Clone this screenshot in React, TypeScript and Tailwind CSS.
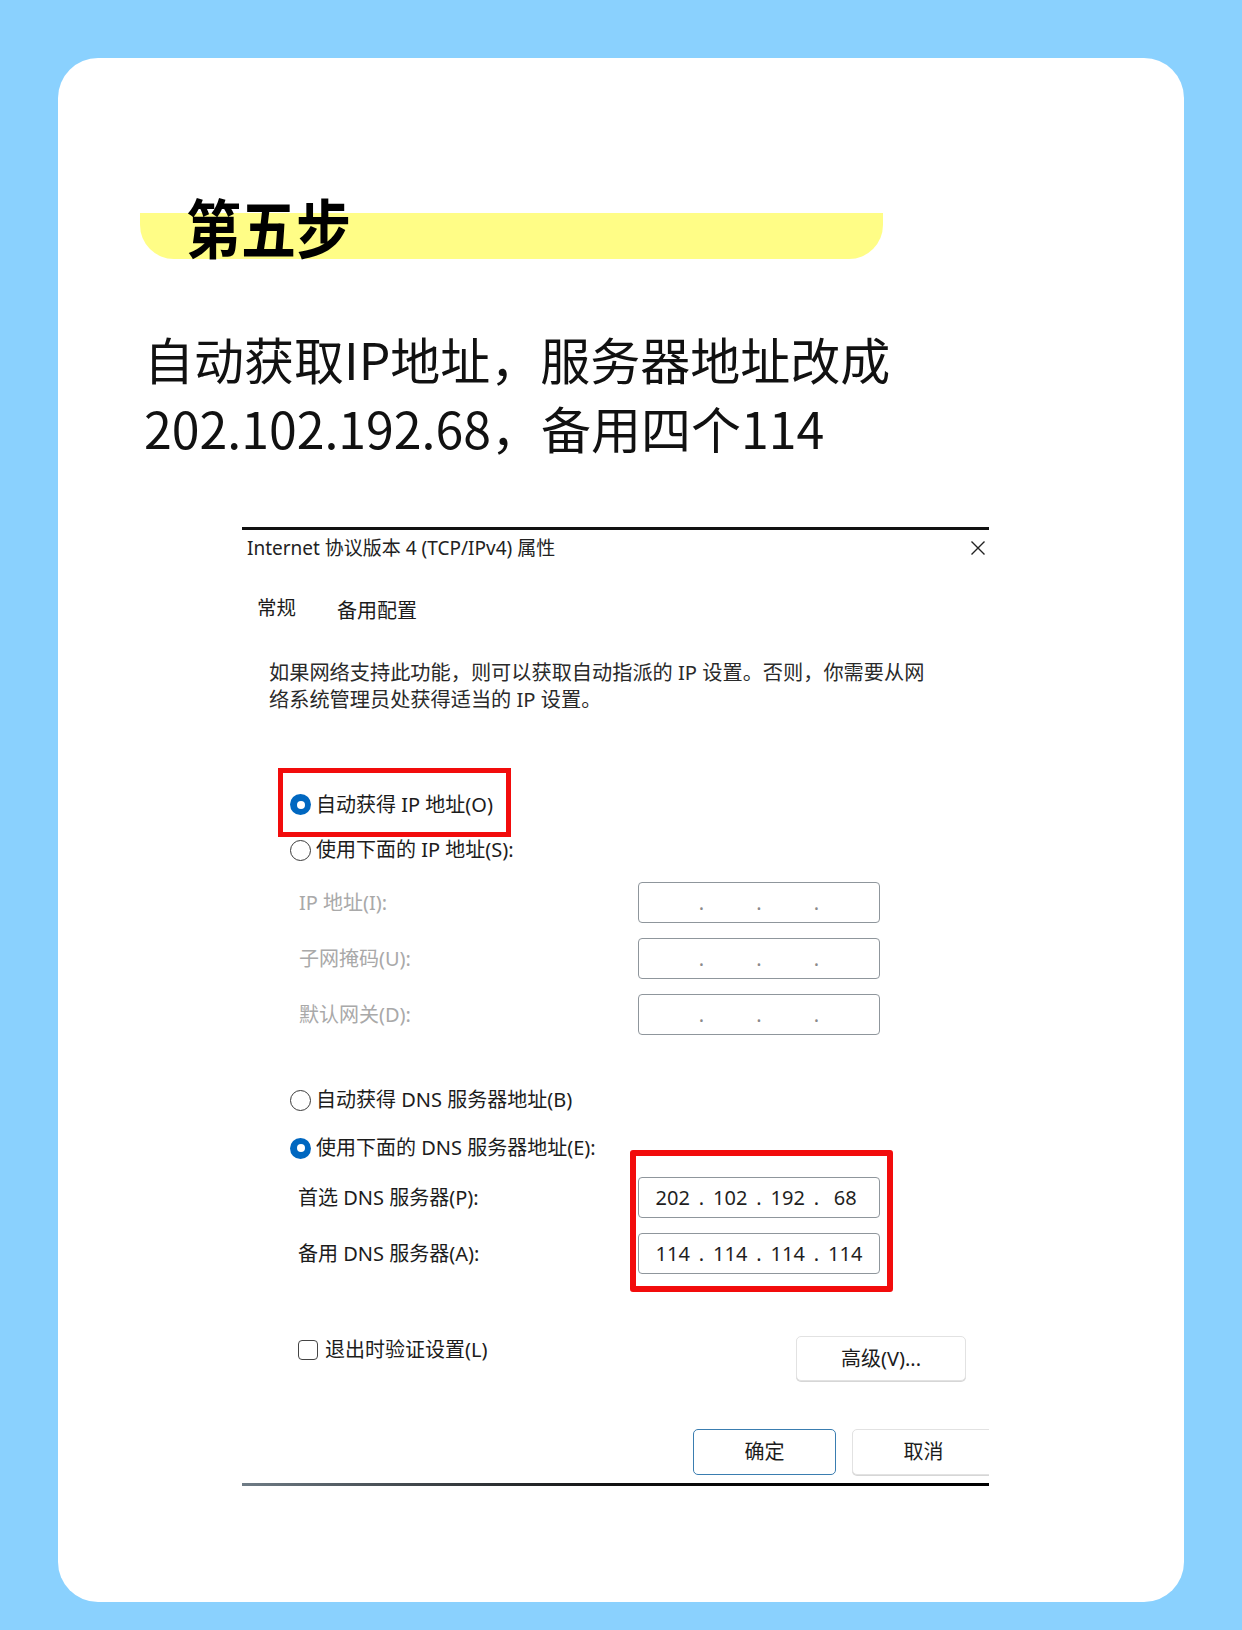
import { Fragment } from "react";

const RED = "border-[#f20c0c]";

function Radio({ on }: { on?: boolean }) {
  if (on) {
    return (
      <span className="flex h-[21px] w-[21px] shrink-0 items-center justify-center rounded-full bg-[#0067c0]">
        <span className="h-[8px] w-[8px] rounded-full bg-white" />
      </span>
    );
  }
  return <span className="h-[21px] w-[21px] shrink-0 rounded-full border-[1.5px] border-[#3a3a3a] bg-white" />;
}

function IpField({ parts }: { parts?: string[] }) {
  const segs = parts ?? ["", "", "", ""];
  return (
    <div className="flex h-[41px] w-[242px] items-center rounded-[4px] border border-[#8f969c] bg-white px-[5px] text-[20px]">
      {segs.map((s, i) => (
        <Fragment key={i}>
          {i > 0 && (
            <span className={parts ? "flex w-0 justify-center text-[#1f1f1f]" : "flex w-0 justify-center text-[#8a8a8a]"}>.</span>
          )}
          <span className="flex-1 text-center text-[#1f1f1f]">{s}</span>
        </Fragment>
      ))}
    </div>
  );
}

function RadioRow({ on, label, className }: { on?: boolean; label: string; className?: string }) {
  return (
    <div className={"flex items-center gap-[5px] " + (className ?? "")}>
      <Radio on={on} />
      <span className="leading-[24px]">{label}</span>
    </div>
  );
}

function Dialog() {
  const ipRows = ["IP 地址(I):", "子网掩码(U):", "默认网关(D):"];
  return (
    <div className="ml-[184px] mt-[65px] flex w-[747px] flex-col overflow-hidden border-t-[3px] border-[#111] font-['Noto_Sans','Noto_Sans_CJK_SC',sans-serif] text-[20px] text-[#1c1c1c]">
      {/* title bar */}
      <div className="flex h-[36px] items-center justify-between pl-[5px] pr-[2px]">
        <span className="text-[19px] text-[#222]">Internet 协议版本 4 (TCP/IPv4) 属性</span>
        <svg width="16" height="16" viewBox="0 0 16 16" className="mr-[1px]">
          <path d="M1.5 1.5 L14.5 14.5 M14.5 1.5 L1.5 14.5" stroke="#222" strokeWidth="1.4" fill="none" />
        </svg>
      </div>

      {/* tabs */}
      <div className="mt-[30px] flex h-[26px] items-start pl-[15px] leading-[24px]">
        <span className="text-[19.5px]">常规</span>
        <span className="ml-[41px] mt-[3px]">备用配置</span>
      </div>

      {/* description */}
      <div className="mt-[37px] pl-[27px] text-[20.2px] leading-[27px] text-[#2a2a2a]">
        <div>如果网络支持此功能，则可以获取自动指派的 IP 设置。否则，你需要从网</div>
        <div>络系统管理员处获得适当的 IP 设置。</div>
      </div>

      {/* ip mode */}
      <div className={"ml-[36px] mt-[55px] flex h-[69px] w-[233px] items-center border-[5px] pl-[7px] pt-[4px] " + RED}>
        <RadioRow on label="自动获得 IP 地址(O)" />
      </div>
      <RadioRow label="使用下面的 IP 地址(S):" className="ml-[48px] mt-[1px] h-[24px]" />

      <div className="mt-[20px] flex flex-col gap-[15px]">
        {ipRows.map((l) => (
          <div key={l} className="flex items-center pl-[57px]">
            <span className="w-[339px] text-[#a9a9a9]">{l}</span>
            <IpField />
          </div>
        ))}
      </div>

      {/* dns mode */}
      <RadioRow label="自动获得 DNS 服务器地址(B)" className="ml-[48px] mt-[53px] h-[24px]" />
      <RadioRow on label="使用下面的 DNS 服务器地址(E):" className="ml-[48px] mt-[24px] h-[24px]" />

      <div className="-mt-[10px] flex items-start pl-[56px]">
        <div className="flex w-[332px] flex-col gap-[15px] pt-[27px]">
          <div className="flex h-[41px] items-center">首选 DNS 服务器(P):</div>
          <div className="flex h-[41px] items-center">备用 DNS 服务器(A):</div>
        </div>
        <div className={"flex flex-col gap-[15px] rounded-[3px] border-[6px] pb-[12px] pl-[2px] pr-[7px] pt-[21px] " + RED}>
          <IpField parts={["202", "102", "192", "68"]} />
          <IpField parts={["114", "114", "114", "114"]} />
        </div>
      </div>

      {/* validate + advanced */}
      <div className="mt-[44px] flex h-[45px] items-start pl-[56px] pr-[23px]">
        <div className="mt-[4px] flex items-center gap-[7px]">
          <span className="h-[20px] w-[20px] rounded-[4px] border-[1.5px] border-[#444] bg-white" />
          <span className="leading-[20px]">退出时验证设置(L)</span>
        </div>
        <button className="ml-auto flex h-[45px] w-[170px] items-center justify-center rounded-[5px] border border-[#e2e2e2] bg-white shadow-[0_1px_0_#d6d6d6]">
          高级(V)...
        </button>
      </div>

      {/* ok / cancel */}
      <div className="mt-[48px] flex h-[46px] gap-[16px] pl-[451px]">
        <button className="flex h-[46px] w-[143px] shrink-0 items-center justify-center rounded-[5px] border-[1.5px] border-[#3a7db0] bg-white">
          确定
        </button>
        <button className="flex h-[46px] w-[143px] shrink-0 items-center justify-center rounded-[5px] border border-[#e2e2e2] bg-white shadow-[0_1px_0_#d6d6d6]">
          取消
        </button>
      </div>

      <div className="mt-[8px] h-[3px] w-full bg-gradient-to-r from-[#6f7c86] via-[#111] to-[#000]" />
    </div>
  );
}

export default function App() {
  return (
    <div className="h-[1630px] w-[1242px] bg-[#8ad1fe] px-[58px] pb-[28px] pt-[58px]">
      <div className="h-[1544px] overflow-hidden rounded-[40px] bg-white">
        {/* step heading */}
        <div className="ml-[82px] mt-[155px] flow-root h-[46px] w-[743px] rounded-b-[34px] bg-[#fffd86]">
          <div className="-mt-[13px] origin-bottom scale-y-[1.15] pl-[46px] font-['Noto_Sans_CJK_SC',sans-serif] text-[55px] font-bold leading-[60px] text-black">
            第五步
          </div>
        </div>

        {/* instruction */}
        <div className="ml-[86px] mt-[65px] font-['Noto_Sans_CJK_SC',sans-serif] text-[50px] leading-[69px] text-[#111]">
          <div>自动获取IP地址，服务器地址改成</div>
          <div>202.102.192.68，备用四个114</div>
        </div>

        <Dialog />
      </div>
    </div>
  );
}
